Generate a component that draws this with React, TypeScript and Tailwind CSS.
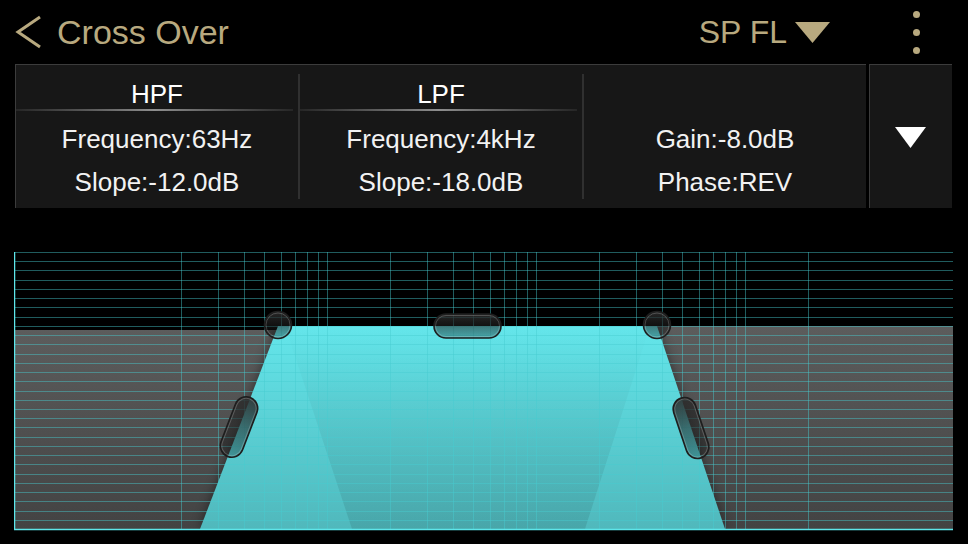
import { FC } from 'react';

const GOLD = '#b8a97f';
const FONT = { fontFamily: '"Liberation Sans", Arial, sans-serif' };

// chart geometry, page pixels
const X0 = 14;
const X1 = 953;
const Y0 = 252;
const Y1 = 529;

const hLines = Array.from({ length: 31 }, (_, i) => Y0 + (i * (Y1 - Y0)) / 30);

const freqs: number[] = [];
[10, 100, 1000].forEach((d) => {
  for (let k = 2; k <= 10; k++) freqs.push(k * d);
});
freqs.push(20000);
const vLines = Array.from(new Set(freqs)).map((f) => 181 + 209 * Math.log10(f / 20));

const GRID = 'rgba(72,205,208,0.45)';

const Knob: FC<{ cx: number; cy: number }> = ({ cx, cy }) => (
  <g>
    <circle cx={cx} cy={cy} r={13.5} fill="url(#knob)" stroke="#1e1e1e" strokeWidth={1.6} />
    <circle cx={cx} cy={cy} r={12} fill="none" stroke="rgba(255,255,255,0.2)" strokeWidth={1} />
  </g>
);

const Pill: FC<{ cx: number; cy: number; w: number; h: number; rot?: number }> = ({ cx, cy, w, h, rot = 0 }) => {
  const r = Math.min(w, h) / 2;
  return (
    <g transform={`rotate(${rot} ${cx} ${cy})`}>
      <rect x={cx - w / 2} y={cy - h / 2} width={w} height={h} rx={r} fill="url(#knob)" stroke="#1e1e1e" strokeWidth={1.6} />
      <rect
        x={cx - w / 2 + 1.5}
        y={cy - h / 2 + 1.5}
        width={w - 3}
        height={h - 3}
        rx={r - 1.5}
        fill="none"
        stroke="rgba(255,255,255,0.2)"
        strokeWidth={1}
      />
    </g>
  );
};

const Chart: FC = () => (
  <svg width={940} height={280} viewBox="14 251 940 280" className="block">
    <defs>
      <linearGradient id="gray" x1="0" y1="0" x2="0" y2="1">
        <stop offset="0" stopColor="#5c5c5c" />
        <stop offset="1" stopColor="#434343" />
      </linearGradient>
      <linearGradient id="cyan" x1="0" y1="0" x2="0" y2="1">
        <stop offset="0" stopColor="#64e6eb" />
        <stop offset="1" stopColor="#50b8bc" />
      </linearGradient>
      <linearGradient id="mid" x1="0" y1="0" x2="0" y2="1">
        <stop offset="0" stopColor="#000" stopOpacity="0" />
        <stop offset="1" stopColor="#000" stopOpacity="0.1" />
      </linearGradient>
      <linearGradient id="knob" x1="0" y1="0" x2="0" y2="1">
        <stop offset="0" stopColor="#2e2e2e" stopOpacity="0.9" />
        <stop offset="0.5" stopColor="#202020" stopOpacity="0.55" />
        <stop offset="1" stopColor="#000" stopOpacity="0.25" />
      </linearGradient>
      <filter id="shade" x="-20%" y="-20%" width="140%" height="140%">
        <feGaussianBlur stdDeviation="6" />
      </filter>
    </defs>

    {/* stop bands */}
    <rect x={X0} y={330} width={300} height={Y1 - 330} fill="url(#gray)" />
    <rect x={640} y={326} width={X1 - 640} height={Y1 - 326} fill="url(#gray)" />

    {/* shadow of pass band */}
    <polygon points="278,326 657,326 725,529 200,529" fill="#000" opacity={0.45} filter="url(#shade)" />
    <polygon points="278,326 657,326 725,529 200,529" fill="url(#cyan)" />
    <polygon points="285,326 650,326 585,529 352,529" fill="url(#mid)" />

    {/* grid */}
    {hLines.map((y) => (
      <line key={`h${y}`} x1={X0} x2={X1} y1={Math.round(y) + 0.5} y2={Math.round(y) + 0.5} stroke={GRID} strokeWidth={1} />
    ))}
    {vLines.map((x) => (
      <line key={`v${x}`} x1={Math.round(x) + 0.5} x2={Math.round(x) + 0.5} y1={Y0} y2={Y1} stroke={GRID} strokeWidth={1} />
    ))}
    <line x1={X0 + 0.5} x2={X0 + 0.5} y1={Y0} y2={Y1 + 1} stroke="#5ee6ea" strokeWidth={1.5} />
    <line x1={X0} x2={X1} y1={Y1 + 0.5} y2={Y1 + 0.5} stroke="#5ee6ea" strokeWidth={1.5} />

    {/* handles */}
    <Knob cx={278} cy={325} />
    <Knob cx={657} cy={325} />
    <Pill cx={467.5} cy={326} w={67} h={24} />
    <Pill cx={239} cy={427} w={23} h={63} rot={21} />
    <Pill cx={691} cy={428} w={23} h={63} rot={-18.5} />
  </svg>
);

const Column: FC<{ title?: string; lines: string[] }> = ({ title, lines }) => (
  <div className="flex-1 flex flex-col pt-[14px]">
    <div className="h-[30px] leading-[30px] text-center text-[26px] text-white">{title}</div>
    <div
      className={
        title
          ? 'h-[2px] mr-[5px] bg-gradient-to-r from-[#262626] via-[#8e8e8e] to-[#262626]'
          : 'h-[2px]'
      }
    />
    <div className="mt-[7px]">
      {lines.map((l) => (
        <div key={l} className="h-[43px] leading-[43px] text-center text-[26px] text-[#f2f2f2] whitespace-nowrap">
          {l}
        </div>
      ))}
    </div>
  </div>
);

const Divider: FC = () => <div className="w-[2px] my-[9px] bg-[#303030]" />;

export default function App() {
  return (
    <div className="w-[968px] h-[544px] bg-black overflow-hidden" style={FONT}>
      {/* Header */}
      <div className="h-[64px] flex items-center justify-between">
        <div className="flex items-center pl-[15px]">
          <svg width="28" height="34" viewBox="0 0 28 34" className="mr-[14px]">
            <polyline points="25,2 3,17 25,32" fill="none" stroke={GOLD} strokeWidth="3" strokeLinejoin="miter" />
          </svg>
          <span className="text-[34px] leading-none" style={{ color: GOLD }}>
            Cross Over
          </span>
        </div>
        <div className="flex items-center pr-[48px]">
          <span className="text-[32px] leading-none" style={{ color: GOLD }}>
            SP FL
          </span>
          <svg width="35" height="21" viewBox="0 0 35 21" className="ml-[8px]">
            <polygon points="0,0 35,0 17.5,21" fill={GOLD} />
          </svg>
          <div className="ml-[83px] flex flex-col gap-[11px]">
            <div className="w-[7px] h-[7px] rounded-full" style={{ background: GOLD }} />
            <div className="w-[7px] h-[7px] rounded-full" style={{ background: GOLD }} />
            <div className="w-[7px] h-[7px] rounded-full" style={{ background: GOLD }} />
          </div>
        </div>
      </div>

      {/* Parameter panel */}
      <div className="flex h-[144px] pl-[15px] pr-[16px] gap-[3px]">
        <div className="flex-1 flex bg-[#171717] border-t border-l border-[#3c3c3c]">
          <Column title="HPF" lines={['Frequency:63Hz', 'Slope:-12.0dB']} />
          <Divider />
          <Column title="LPF" lines={['Frequency:4kHz', 'Slope:-18.0dB']} />
          <Divider />
          <Column lines={['Gain:-8.0dB', 'Phase:REV']} />
        </div>
        <div className="w-[83px] flex items-center justify-center bg-[#171717] border-t border-l border-[#3c3c3c]">
          <svg width="31" height="21" viewBox="0 0 31 21" className="-ml-[2px] mt-[2px]">
            <polygon points="0,0 31,0 15.5,21" fill="#fff" />
          </svg>
        </div>
      </div>

      {/* Graph */}
      <div className="mt-[43px] ml-[14px]">
        <Chart />
      </div>
    </div>
  );
}
